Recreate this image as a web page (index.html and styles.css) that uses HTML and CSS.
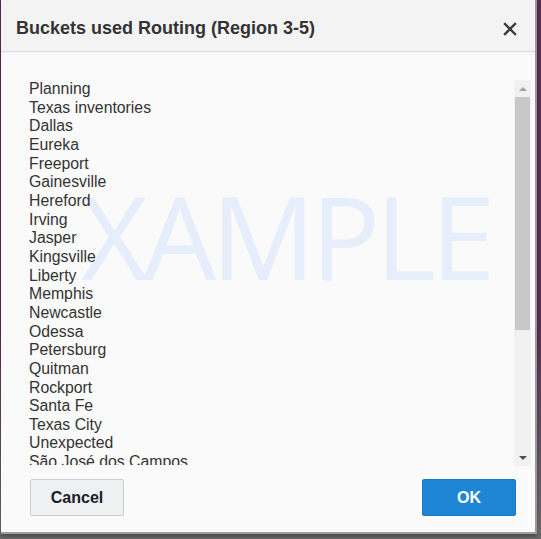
FILE: index.html
```html
<!DOCTYPE html>
<html>
<head>
<meta charset="utf-8">
<link rel="stylesheet" href="styles.css">
</head>
<body>
<div class="page">
  <div class="dialog">
    <div class="header">
      <div class="title">Buckets used Routing (Region 3-5)</div>
      <div class="close">
        <svg width="14" height="14" viewBox="0 0 14 14"><path d="M2 2 L12 12 M12 2 L2 12" stroke="#3a3a3a" stroke-width="2.4" stroke-linecap="square"/></svg>
      </div>
    </div>
    <div class="body">
      <div class="watermark">XAMPLE</div>
      <div class="listwrap">
        <ul class="list">
          <li>Planning</li>
          <li>Texas inventories</li>
          <li>Dallas</li>
          <li>Eureka</li>
          <li>Freeport</li>
          <li>Gainesville</li>
          <li>Hereford</li>
          <li>Irving</li>
          <li>Jasper</li>
          <li>Kingsville</li>
          <li>Liberty</li>
          <li>Memphis</li>
          <li>Newcastle</li>
          <li>Odessa</li>
          <li>Petersburg</li>
          <li>Quitman</li>
          <li>Rockport</li>
          <li>Santa Fe</li>
          <li>Texas City</li>
          <li>Unexpected</li>
          <li>São José dos Campos</li>
          <li>Tyler</li>
        </ul>
        <div class="scrollbar">
          <div class="arrow up"></div>
          <div class="track"><div class="thumb"></div></div>
          <div class="arrow down"></div>
        </div>
      </div>
    </div>
    <div class="footer">
      <button class="btn cancel">Cancel</button>
      <button class="btn ok">OK</button>
    </div>
  </div>
</div>
</body>
</html>
```
FILE: styles.css
```css
html, body {
  margin: 0;
  padding: 0;
  height: 539px;
  overflow: hidden;
}
body {
  background: #7d7d7d;
  font-family: "Liberation Sans", Arial, sans-serif;
}
.page {
  display: flex;
  height: 539px;
  background: linear-gradient(#5a2a55, #5a2a55 60%, #6a6a6a);
}
.dialog {
  width: 534px;
  height: 532px;
  margin-left: 1px;
  background: #fafafa;
  border-right: 2px solid #9a9a9a;
  border-bottom: 2px solid #a0a0a0;
  display: flex;
  flex-direction: column;
  position: relative;
  box-shadow: 0 3px 3px rgba(0,0,0,0.25);
}
.header {
  height: 51px;
  background: #f3f3f3;
  border-bottom: 1px solid #d6dbe0;
  display: flex;
  align-items: center;
  justify-content: space-between;
  padding: 0 18px 0 15px;
  flex: none;
}
.title {
  font-size: 18px;
  font-weight: bold;
  color: #333;
  padding-top: 6px;
}
.close {
  display: flex;
  padding-top: 7px;
}
.body {
  flex: 1;
  position: relative;
  padding: 28px 4px 0 28px;
}
.watermark {
  position: absolute;
  left: 80px;
  top: 125px;
  font-family: "Open Sans", sans-serif;
  font-size: 116px;
  line-height: 1;
  color: #e6eefb;
  letter-spacing: -5px;
}
.listwrap {
  display: flex;
  height: 386px;
  position: relative;
}
.list {
  flex: 1;
  list-style: none;
  margin: 0;
  padding: 0;
  overflow: hidden;
  height: 385px;
  font-size: 15.8px;
  line-height: 18.65px;
  color: #333;
}
.scrollbar {
  width: 17px;
  background: #f1f1f1;
  display: flex;
  flex-direction: column;
}
.arrow {
  height: 17px;
  display: flex;
  align-items: center;
  justify-content: center;
}
.arrow::after {
  content: "";
  border-left: 4px solid transparent;
  border-right: 4px solid transparent;
}
.arrow.up::after {
  border-bottom: 4px solid #a3a3a3;
}
.arrow.down::after {
  border-top: 4px solid #505050;
}
.track {
  flex: 1;
  padding: 0 1px;
}
.thumb {
  height: 233px;
  background: #c8c8c8;
}
.footer {
  height: 66px;
  flex: none;
  display: flex;
  justify-content: space-between;
  align-items: flex-start;
  padding: 13px 19px 0 29px;
}
.btn {
  width: 94px;
  height: 37px;
  font-family: "Liberation Sans", Arial, sans-serif;
  font-size: 16px;
  font-weight: bold;
  border-radius: 2px;
}
.cancel {
  background: #eef0f2;
  border: 1px solid #c8cfd6;
  color: #1c1c28;
}
.ok {
  background: #1f86d6;
  border: 1px solid #1a7ac4;
  color: #fff;
}
```
